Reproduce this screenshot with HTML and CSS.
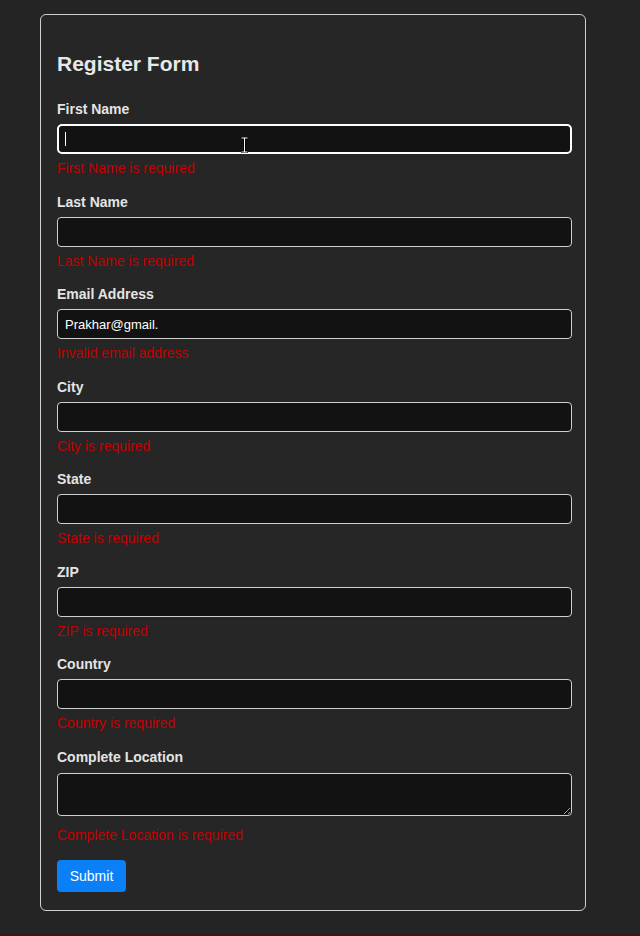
FILE: index.html
```html
<!DOCTYPE html>
<html lang="en">
<head>
<meta charset="utf-8">
<title>Register Form</title>
<link rel="stylesheet" href="styles.css">
</head>
<body>
<div class="page">
  <form class="card">
    <h2 class="title">Register Form</h2>
    <div class="group">
      <label class="label">First Name</label>
      <div class="field-wrap">
        <input class="input focused" type="text">
        <span class="caret"></span>
        <svg class="ibeam" width="9" height="16" viewBox="0 0 9 16"><path d="M1 1h7M4.5 1v14M1 15h7" stroke="#000" stroke-width="3" fill="none"/><path d="M1.5 1h6M4.5 1v14M1.5 15h6" stroke="#fff" stroke-width="1" fill="none"/></svg>
      </div>
      <div class="error">First Name is required</div>
    </div>
    <div class="group">
      <label class="label">Last Name</label>
      <input class="input" type="text">
      <div class="error">Last Name is required</div>
    </div>
    <div class="group">
      <label class="label">Email Address</label>
      <input class="input" type="text" value="Prakhar@gmail.">
      <div class="error">Invalid email address</div>
    </div>
    <div class="group">
      <label class="label">City</label>
      <input class="input" type="text">
      <div class="error">City is required</div>
    </div>
    <div class="group">
      <label class="label">State</label>
      <input class="input" type="text">
      <div class="error">State is required</div>
    </div>
    <div class="group">
      <label class="label">ZIP</label>
      <input class="input" type="text">
      <div class="error">ZIP is required</div>
    </div>
    <div class="group">
      <label class="label">Country</label>
      <input class="input" type="text">
      <div class="error">Country is required</div>
    </div>
    <div class="group group-area">
      <label class="label">Complete Location</label>
      <textarea class="input area"></textarea>
      <div class="error error-area">Complete Location is required</div>
    </div>
    <button class="submit" type="button">Submit</button>
  </form>
  <div class="bottom-line"></div>
</div>
</body>
</html>
```
FILE: styles.css
```css
html, body {
  margin: 0;
  padding: 0;
  background: #242424;
}
body {
  font-family: "Liberation Sans", Arial, sans-serif;
  color: #e6e6e6;
}
.page {
  padding-top: 14px;
  padding-left: 40px;
  height: 936px;
  box-sizing: border-box;
  overflow: hidden;
}
.card {
  box-sizing: border-box;
  width: 546px;
  border: 1px solid #cfcfcf;
  border-radius: 6px;
  background: #262626;
  padding: 37px 16px 18px 16px;
  display: flex;
  flex-direction: column;
}
.title {
  margin: 0 0 26px 0;
  font-size: 21px;
  line-height: 23px;
  font-weight: bold;
  color: #e8e8e8;
}
.group {
  display: flex;
  flex-direction: column;
  margin-bottom: 17.5px;
}
.label {
  font-size: 14px;
  line-height: 16px;
  font-weight: bold;
  color: #e4e4e4;
  margin-bottom: 7px;
}
.field-wrap {
  position: relative;
  width: 515px;
  height: 30px;
}
.input {
  box-sizing: border-box;
  width: 515px;
  height: 30px;
  margin: 0;
  background: #121212;
  border: 1px solid #cfcfcf;
  border-radius: 4px;
  color: #ffffff;
  font-family: "Liberation Sans", Arial, sans-serif;
  font-size: 13px;
  padding: 0 7px;
  outline: none;
}
.input.focused {
  border: 2px solid #ffffff;
  border-radius: 5px;
}
.caret {
  position: absolute;
  left: 8px;
  top: 8px;
  width: 1px;
  height: 14px;
  background: #ffffff;
}
.ibeam {
  position: absolute;
  left: 183px;
  top: 13px;
}
.group-area .label {
  margin-bottom: 8px;
}
.area {
  height: 43px;
  display: block;
  resize: vertical;
  padding: 6px 7px;
}
.error {
  margin-top: 6px;
  font-size: 14px;
  line-height: 16px;
  color: #c40000;
}
.error-area {
  margin-top: 11px;
}
.group-area {
  margin-bottom: 17px;
}
.submit {
  align-self: flex-start;
  box-sizing: border-box;
  height: 32px;
  width: 69px;
  padding: 0;
  background: #0b7ff5;
  color: #ffffff;
  border: none;
  border-radius: 4px;
  font-family: "Liberation Sans", Arial, sans-serif;
  font-size: 14px;
}
.bottom-line {
  margin-top: 23px;
  margin-left: -40px;
  width: 640px;
  height: 2px;
  background: #3a1616;
}
```
